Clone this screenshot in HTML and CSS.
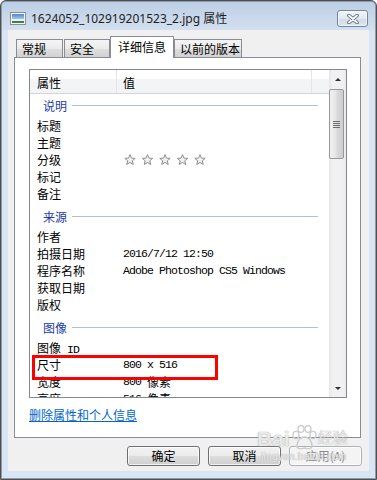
FILE: index.html
```html
<!DOCTYPE html>
<html lang="zh-CN">
  <head>
    <meta charset="UTF-8" />
    <title>1624052_102919201523_2.jpg 属性</title>
    <link rel="stylesheet" href="styles.css">
  </head>
  <body>
    <div class="window">
      <!-- 标题栏 -->
      <div class="titlebar">
        <svg class="app-icon" width="16" height="13" viewBox="0 0 16 13">
          <defs>
            <linearGradient id="sky" x1="0" y1="0" x2="0" y2="1">
              <stop offset="0" stop-color="#4f86cf" />
              <stop offset="1" stop-color="#b8d4f0" />
            </linearGradient>
          </defs>
          <rect x="0.5" y="0.5" width="15" height="12" fill="#f4f4f4" stroke="#8a8f96" />
          <rect x="2" y="2" width="12" height="6" fill="url(#sky)" />
          <rect x="2" y="7" width="12" height="2" fill="#e8f0f6" />
          <rect x="2" y="9" width="12" height="2" fill="#3f7f4a" />
        </svg>
        <span class="title">1624052_102919201523_2.jpg 属性</span>
        <div class="close">
          <svg width="14" height="10" viewBox="0 0 14 10">
            <path d="M3 1.5 L11 8.5 M11 1.5 L3 8.5" stroke="#56657a" stroke-width="3.6" stroke-linecap="round" />
            <path d="M3 1.5 L11 8.5 M11 1.5 L3 8.5" stroke="#ffffff" stroke-width="1.8" stroke-linecap="round" />
          </svg>
        </div>
      </div>

      <div class="client">
        <!-- 탭 -->
        <div class="tabs">
          <div class="tab tab-general">常规</div>
          <div class="tab tab-security">安全</div>
          <div class="tab tab-detail active">详细信息</div>
          <div class="tab tab-prev">以前的版本</div>
        </div>

        <div class="panel">
          <div class="listview">
            <div class="lv-main">
              <div class="lv-head">
                <div class="hcell col-name">属性</div>
                <div class="hcell col-val">值</div>
                <div class="hcell col-rest"></div>
              </div>
              <div class="lv-body">
                <div class="group">说明</div>
                <div class="row"><span class="name">标题</span></div>
                <div class="row"><span class="name">主题</span></div>
                <div class="row">
                  <span class="name">分级</span>
                  <span class="val">
                    <svg class="stars" width="82" height="12" viewBox="0 0 82 12">
                      <defs>
                        <linearGradient id="starFill" x1="0" y1="0" x2="0" y2="1">
                          <stop offset="0" stop-color="#ffffff" />
                          <stop offset="1" stop-color="#e6e6e6" />
                        </linearGradient>
                        <symbol id="star" viewBox="0 0 12 12">
                          <polygon points="6,0.6 7.4,4.1 11.2,4.35 8.3,6.8 9.25,10.5 6,8.45 2.75,10.5 3.7,6.8 0.8,4.35 4.6,4.1" fill="url(#starFill)" stroke="#8f8f8f" stroke-width="1" stroke-linejoin="round" />
                        </symbol>
                      </defs>
                      <use href="#star" x="0" y="0" width="12" height="12" />
                      <use href="#star" x="17.5" y="0" width="12" height="12" />
                      <use href="#star" x="35" y="0" width="12" height="12" />
                      <use href="#star" x="52.5" y="0" width="12" height="12" />
                      <use href="#star" x="70" y="0" width="12" height="12" />
                    </svg>
                  </span>
                </div>
                <div class="row"><span class="name">标记</span></div>
                <div class="row"><span class="name">备注</span></div>

                <div class="group">来源</div>
                <div class="row"><span class="name">作者</span></div>
                <div class="row"><span class="name">拍摄日期</span><span class="val mono">2016/7/12 12:50</span></div>
                <div class="row"><span class="name">程序名称</span><span class="val mono">Adobe Photoshop CS5 Windows</span></div>
                <div class="row"><span class="name">获取日期</span></div>
                <div class="row"><span class="name">版权</span></div>

                <div class="group">图像</div>
                <div class="row"><span class="name">图像<span class="mono"> ID</span></span></div>
                <div class="row mark"><span class="name">尺寸</span><span class="val mono">800 x 516</span></div>
                <div class="row"><span class="name">宽度</span><span class="val"><span class="mono">800 </span>像素</span></div>
                <div class="row"><span class="name">高度</span><span class="val"><span class="mono">516 </span>像素</span></div>
              </div>
            </div>
            <div class="scrollbar">
              <div class="sb-btn"><span class="arrow-up"></span></div>
              <div class="sb-thumb"><span class="grip"></span></div>
              <div class="sb-track"></div>
              <div class="sb-btn"><span class="arrow-down"></span></div>
            </div>
          </div>
          <a class="remove-link" href="#">删除属性和个人信息</a>
        </div>

        <div class="actions">
          <button class="btn">确定</button>
          <button class="btn">取消</button>
          <button class="btn" disabled>应用(A)</button>
        </div>
      </div>

      <!-- 워터마크 -->
      <div class="watermark">
        <div class="wm-line">
          <span class="wm-bai">Bai</span>
          <svg class="wm-paw" width="28" height="26" viewBox="0 0 28 26">
            <g fill="none" stroke="#cccccc" stroke-width="1.4">
              <ellipse cx="6" cy="10" rx="3" ry="3.6" />
              <ellipse cx="11" cy="4" rx="3" ry="3.4" />
              <ellipse cx="18" cy="4" rx="3" ry="3.4" />
              <ellipse cx="23" cy="10" rx="3" ry="3.6" />
              <path d="M7 21 C7 15 11 12 14.5 12 C18 12 22 15 22 21 C22 24 18 24 14.5 23 C11 24 7 24 7 21 Z" />
            </g>
          </svg>
          <span class="wm-jy">经验</span>
        </div>
        <div class="wm-url">jingyan.baidu.com</div>
      </div>
    </div>
  </body>
</html>
```

FILE: styles.css
```css
* {
  box-sizing: border-box;
}

body {
  margin: 0;
  width: 377px;
  height: 480px;
  overflow: hidden;
  font-family: "Noto Sans CJK SC", "Noto Sans", sans-serif;
  font-size: 12px;
  color: #000;
  background: #fff;
}

/* 창 프레임 */
.window {
  position: relative;
  height: 480px;
  border: 1px solid #4f4f4f;
  border-radius: 6px 6px 0 0;
  background: linear-gradient(#bccee5, #d3e0ef 29px, #d9e5f3 30px);
  box-shadow: inset 0 0 0 1px #8e9aab;
}

.titlebar {
  display: flex;
  align-items: flex-start;
  height: 29px;
  padding: 9px 8px 0 9px;
}

.app-icon {
  flex: none;
  margin-top: 2px;
}

.title {
  flex: 1;
  margin-left: 5px;
  line-height: 17px;
  font-family: "Noto Sans", "Noto Sans CJK SC", sans-serif;
  font-size: 12px;
  color: #1e1e1e;
  white-space: nowrap;
}

.close {
  width: 31px;
  height: 17px;
  border: 1px solid #76859b;
  border-radius: 3px;
  background: linear-gradient(#f3f6fa, #e2e8f0 50%, #d2dae6 51%, #dde4ee);
  box-shadow: inset 0 0 0 1px rgba(255, 255, 255, 0.6);
  display: flex;
  align-items: center;
  justify-content: center;
}

.client {
  height: 441px;
  margin: 0 7px;
  padding-top: 6px;
  background: #f0f0f0;
}

/* 탭 */
.tabs {
  display: flex;
  align-items: flex-end;
  height: 21px;
  margin-left: 8px;
}

.tab {
  height: 18px;
  padding-left: 5px;
  border: 1px solid #898c95;
  border-bottom: none;
  line-height: 17px;
  background: linear-gradient(#f4f4f4, #ebebeb 50%, #dedede 51%, #d2d2d2);
  white-space: nowrap;
}

.tab-general {
  width: 47px;
  margin-right: 1px;
}

.tab-security {
  width: 46px;
}

.tab-detail {
  width: 64px;
}

.tab-prev {
  width: 68px;
}

.tab.active {
  position: relative;
  z-index: 1;
  height: 22px;
  margin-bottom: -1px;
  padding-left: 7px;
  line-height: 19px;
  background: #fff;
}

.panel {
  height: 381px;
  margin: 0 8px 0 6px;
  padding: 11px 13px 0 14px;
  border: 1px solid #898c95;
  background: #fff;
}

/* 목록 */
.listview {
  display: flex;
  height: 329px;
  border: 1px solid #828790;
}

.lv-main {
  flex: 1;
  overflow: hidden;
}

.lv-head {
  display: flex;
  height: 24px;
  border-bottom: 1px solid #d5d5d5;
  background: linear-gradient(#ffffff, #ffffff 40%, #f3f4f6 41%, #f2f3f5);
}

.hcell {
  padding-top: 2px;
  line-height: 21px;
  border-right: 1px solid #e3e5e8;
}

.col-name {
  width: 87px;
  padding-left: 7px;
}

.col-val {
  width: 195px;
  padding-left: 6px;
}

.col-rest {
  flex: 1;
  border-right: none;
}

.group {
  display: flex;
  align-items: center;
  height: 23px;
  padding-left: 13px;
  color: #1c3ca6;
}

.group::after {
  content: "";
  flex: 1;
  height: 1px;
  margin: 0 11px 0 5px;
  background: #b2c0dc;
}

.row + .group {
  margin-top: 3px;
}

.row {
  display: flex;
  height: 17px;
  line-height: 17px;
  white-space: nowrap;
}

.row .name {
  width: 93px;
  padding-left: 7px;
  flex: none;
}

.val {
  display: flex;
  align-items: center;
}

.mono {
  font-family: "Liberation Mono", monospace;
  font-size: 11.5px;
  letter-spacing: -0.9px;
  white-space: pre;
}

.stars {
  display: block;
  margin-left: 1px;
}

/* 빨간 표시 상자 */
.row.mark {
  position: relative;
}

.row.mark::after {
  content: "";
  position: absolute;
  left: 2px;
  top: -1px;
  width: 180px;
  height: 19px;
  border: 3px solid #ff0000;
}

/* 스크롤바 */
.scrollbar {
  display: flex;
  flex-direction: column;
  width: 17px;
  background: linear-gradient(90deg, #e6e6e6, #f1f1f1 20%, #f1f1f1 80%, #e9e9e9);
}

.sb-btn {
  display: flex;
  align-items: center;
  justify-content: center;
  height: 18px;
  flex: none;
}

.arrow-up,
.arrow-down {
  width: 0;
  height: 0;
  border-left: 3px solid transparent;
  border-right: 3px solid transparent;
}

.arrow-up {
  border-bottom: 3px solid #2f2f2f;
}

.arrow-down {
  border-top: 3px solid #2f2f2f;
}

.sb-thumb {
  display: flex;
  align-items: center;
  justify-content: center;
  height: 70px;
  margin: 1px 2px 0 0;
  border: 1px solid #979797;
  border-radius: 2px;
  background: linear-gradient(90deg, #f1f1f1, #e5e5e5 45%, #d9d9d9 55%, #cdcdcd);
  flex: none;
}

.grip {
  width: 7px;
  height: 7px;
  background: repeating-linear-gradient(#6e6e6e 0 1px, transparent 1px 2px);
}

.sb-track {
  flex: 1;
}

.remove-link {
  display: block;
  margin-top: 10px;
  line-height: 14px;
  color: #0066cc;
  text-decoration: underline;
  white-space: nowrap;
}

/* 버튼 */
.actions {
  display: flex;
  justify-content: flex-end;
  gap: 8px;
  margin: 8px 7px 0 0;
}

.btn {
  width: 73px;
  height: 20px;
  padding: 0;
  border: 1px solid #707070;
  border-radius: 3px;
  background: linear-gradient(#f2f2f2, #ebebeb 50%, #dddddd 51%, #cfcfcf);
  box-shadow: inset 0 0 0 1px rgba(255, 255, 255, 0.7);
  font-family: "Noto Sans CJK SC", sans-serif;
  font-size: 12px;
  line-height: 18px;
  color: #000;
}

.btn:disabled {
  border-color: #adb2b5;
  background: #f4f4f4;
  color: #8a8a8a;
}

/* 워터마크 */
.watermark {
  position: absolute;
  left: 256px;
  top: 424px;
  color: rgba(255, 255, 255, 0.75);
  text-shadow: 0 0 1px #a6a6a6, 0 0 1px #bcbcbc;
  pointer-events: none;
}

.wm-line {
  display: flex;
  align-items: flex-end;
}

.wm-bai {
  font-family: "Liberation Sans", sans-serif;
  font-size: 21px;
  font-weight: bold;
  line-height: 22px;
  margin-bottom: 3px;
}

.wm-paw {
  margin-bottom: 2px;
}

.wm-jy {
  font-size: 15px;
  line-height: 20px;
  margin-bottom: 6px;
}

.wm-url {
  margin-top: -2px;
  padding-left: 4px;
  font-family: "Liberation Sans", sans-serif;
  font-size: 10px;
  line-height: 12px;
  letter-spacing: 0.3px;
}
```
